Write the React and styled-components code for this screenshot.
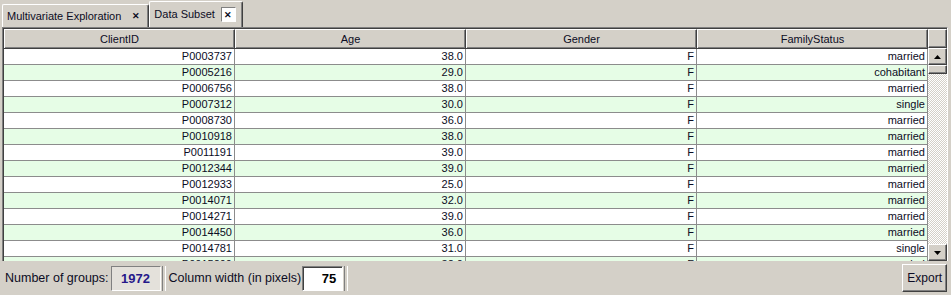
import styled, { createGlobalStyle } from 'styled-components';

const GlobalStyle = createGlobalStyle`
  html, body {
    margin: 0;
    padding: 0;
    background: #d4d0c8;
  }
  body {
    font-family: 'Liberation Sans', Tahoma, Arial, sans-serif;
    color: #0c0c24;
  }
`;

const rows = [
  ['P0003737', '38.0', 'F', 'married'],
  ['P0005216', '29.0', 'F', 'cohabitant'],
  ['P0006756', '38.0', 'F', 'married'],
  ['P0007312', '30.0', 'F', 'single'],
  ['P0008730', '36.0', 'F', 'married'],
  ['P0010918', '38.0', 'F', 'married'],
  ['P0011191', '39.0', 'F', 'married'],
  ['P0012344', '39.0', 'F', 'married'],
  ['P0012933', '25.0', 'F', 'married'],
  ['P0014071', '32.0', 'F', 'married'],
  ['P0014271', '39.0', 'F', 'married'],
  ['P0014450', '36.0', 'F', 'married'],
  ['P0014781', '31.0', 'F', 'single'],
  ['P0015299', '32.0', 'F', 'married'],
];

const columns = ['ClientID', 'Age', 'Gender', 'FamilyStatus'];

const Page = styled.div`
  width: 951px;
  height: 295px;
  display: flex;
  flex-direction: column;
  background: #d4d0c8;
  overflow: hidden;
`;

const TabBar = styled.div`
  height: 27px;
  display: flex;
  align-items: flex-end;
  padding-left: 2px;
  box-sizing: border-box;
`;

const Tab = styled.div`
  display: flex;
  align-items: center;
  gap: ${(p) => (p.$active ? '6px' : '11px')};
  height: ${(p) => (p.$active ? '26px' : '23px')};
  padding: ${(p) => (p.$active ? '0 6px 2px 4px' : '0 8px 0 4px')};
  box-sizing: border-box;
  border-left: 1px solid #ffffff;
  border-top: 1px solid #ffffff;
  border-right: 1px solid #404040;
  box-shadow: inset -1px 0 0 #808080;
  border-radius: 2px 2px 0 0;
  font-size: 11px;
  white-space: nowrap;
`;

const CloseMark = styled.span`
  font-size: 9px;
  font-weight: bold;
  line-height: 1;
`;

const CloseButton = styled.span`
  width: 15px;
  height: 15px;
  display: flex;
  align-items: center;
  justify-content: center;
  box-sizing: border-box;
  border-top: 1px solid #808080;
  border-left: 1px solid #808080;
  border-right: 1px solid #ffffff;
  border-bottom: 1px solid #ffffff;
  background: #ffffff;
  font-size: 9px;
  font-weight: bold;
  margin-top: 2px;
`;

const Panel = styled.div`
  margin: 0 3px 0 2px;
  height: 234px;
  display: flex;
  box-sizing: border-box;
  border-top: 1px solid #808080;
  border-left: 1px solid #808080;
  border-right: 1px solid #ffffff;
  box-shadow: inset 1px 1px 0 #404040;
  padding: 1px 0 0 1px;
  overflow: hidden;
`;

const Grid = styled.div`
  width: 924px;
  display: flex;
  flex-direction: column;
  overflow: hidden;
`;

const HeaderRow = styled.div`
  display: grid;
  grid-template-columns: repeat(4, 231px);
  height: 19px;
  flex-shrink: 0;
  border-bottom: 1px solid #404040;
`;

const HeaderCell = styled.div`
  display: flex;
  align-items: center;
  justify-content: center;
  font-size: 11px;
  background: #d4d0c8;
  box-sizing: border-box;
  border-left: 1px solid #ffffff;
  border-top: 1px solid #ffffff;
  border-right: 1px solid #404040;
  box-shadow: inset -1px -1px 0 #808080;
`;

const Row = styled.div`
  display: grid;
  grid-template-columns: repeat(4, 231px);
  height: 16px;
  flex-shrink: 0;
  box-sizing: border-box;
  border-bottom: 1px solid #8c8c8c;
  background: ${(p) => (p.$alt ? '#e6fde6' : '#ffffff')};
`;

const Cell = styled.div`
  display: flex;
  align-items: center;
  justify-content: flex-end;
  padding-right: 2px;
  font-size: 11px;
  line-height: 1;
  box-sizing: border-box;
  border-right: 1px solid #8c8c8c;
`;

const ScrollColumn = styled.div`
  width: 19px;
  display: flex;
  flex-direction: column;
  flex-shrink: 0;
`;

const ScrollCorner = styled.div`
  height: 19px;
  box-sizing: border-box;
  border-left: 1px solid #ffffff;
  border-top: 1px solid #ffffff;
  border-right: 1px solid #404040;
  border-bottom: 1px solid #404040;
  box-shadow: inset -1px -1px 0 #808080;
  flex-shrink: 0;
`;

const ScrollTrack = styled.div`
  flex: 1;
  display: flex;
  flex-direction: column;
  background-color: #ffffff;
  background-image: repeating-conic-gradient(#d4d0c8 0 25%, #ffffff 0 50%);
  background-size: 2px 2px;
`;

const ScrollButton = styled.div`
  height: ${(p) => p.$h || 17}px;
  flex-shrink: 0;
  display: flex;
  align-items: center;
  justify-content: center;
  background: #d4d0c8;
  box-sizing: border-box;
  border-left: 1px solid #ffffff;
  border-top: 1px solid #ffffff;
  border-right: 1px solid #404040;
  border-bottom: 1px solid #404040;
  box-shadow: inset -1px -1px 0 #808080;
  margin-top: ${(p) => (p.$push ? 'auto' : '0')};
`;

const BottomBar = styled.div`
  flex: 1;
  display: flex;
  align-items: center;
  padding: 0 4px 0 5px;
  font-size: 12.5px;
`;

const Label = styled.span`
  white-space: nowrap;
  margin-right: ${(p) => p.$gap || 2}px;
`;

const ValueBox = styled.div`
  width: ${(p) => p.$w}px;
  height: 25px;
  box-sizing: border-box;
  display: flex;
  align-items: center;
  justify-content: ${(p) => (p.$input ? 'flex-end' : 'center')};
  padding-right: ${(p) => (p.$input ? '6px' : '0')};
  font-size: 13px;
  font-weight: bold;
  color: ${(p) => (p.$input ? '#000000' : '#26188a')};
  background: ${(p) => (p.$input ? '#ffffff' : '#e4e1db')};
  border-top: 1px solid #808080;
  border-left: 1px solid #808080;
  border-right: 1px solid #ffffff;
  border-bottom: 1px solid #ffffff;
  box-shadow: ${(p) => (p.$input ? 'inset 1px 1px 0 #404040' : 'none')};
`;

const Divider = styled.div`
  width: 2px;
  height: 25px;
  border-left: 1px solid #808080;
  border-right: 1px solid #ffffff;
  margin: 0 3px 0 1px;
`;

const Button = styled.button`
  margin-left: auto;
  height: 28px;
  padding: 0 4px;
  font-family: inherit;
  font-size: 12px;
  color: inherit;
  background: #d4d0c8;
  border-left: 1px solid #ffffff;
  border-top: 1px solid #ffffff;
  border-right: 1px solid #404040;
  border-bottom: 1px solid #404040;
  box-shadow: inset -1px -1px 0 #808080;
`;

function Arrow({ down }) {
  return (
    <svg width="7" height="4" viewBox="0 0 7 4">
      <path d={down ? 'M0 0H7L3.5 4Z' : 'M0 4H7L3.5 0Z'} fill="#000" />
    </svg>
  );
}

export default function App() {
  return (
    <>
      <GlobalStyle />
      <Page>
        <TabBar>
          <Tab>
            Multivariate Exploration
            <CloseMark>✕</CloseMark>
          </Tab>
          <Tab $active>
            Data Subset
            <CloseButton>✕</CloseButton>
          </Tab>
        </TabBar>
        <Panel>
          <Grid>
            <HeaderRow>
              {columns.map((c) => (
                <HeaderCell key={c}>{c}</HeaderCell>
              ))}
            </HeaderRow>
            {rows.map((r, i) => (
              <Row key={r[0]} $alt={i % 2 === 1}>
                {r.map((v, j) => (
                  <Cell key={j}>{v}</Cell>
                ))}
              </Row>
            ))}
          </Grid>
          <ScrollColumn>
            <ScrollCorner />
            <ScrollTrack>
              <ScrollButton>
                <Arrow />
              </ScrollButton>
              <ScrollButton $h={9} />
              <ScrollButton $push>
                <Arrow down />
              </ScrollButton>
            </ScrollTrack>
          </ScrollColumn>
        </Panel>
        <BottomBar>
          <Label>Number of groups:</Label>
          <ValueBox $w={50}>1972</ValueBox>
          <Divider />
          <Label $gap={1}>Column width (in pixels)</Label>
          <ValueBox $w={41} $input>
            75
          </ValueBox>
          <Divider />
          <Button>Export</Button>
        </BottomBar>
      </Page>
    </>
  );
}
